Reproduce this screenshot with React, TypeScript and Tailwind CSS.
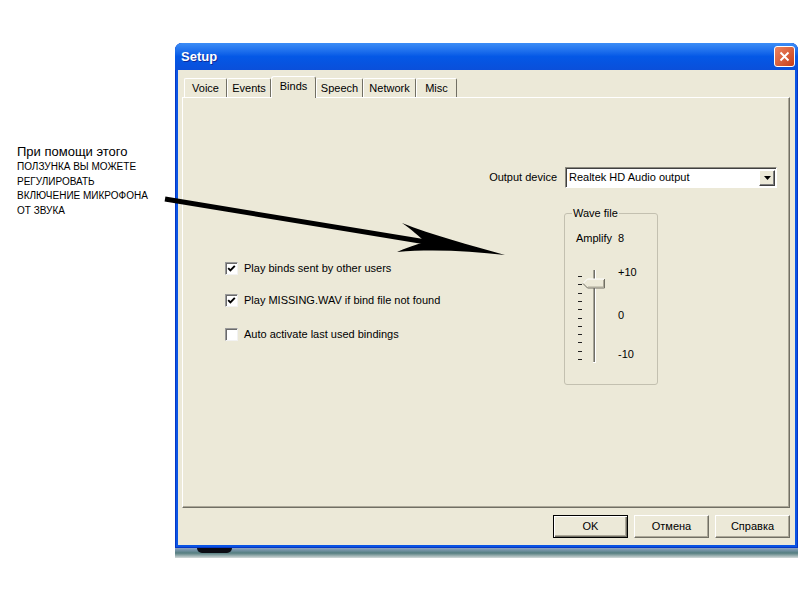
import React from "react";

const TICKS = [0, 1, 2, 3, 4, 5, 6, 7, 8, 9, 10];

function Tab({ label, w, selected }: { label: string; w: string; selected?: boolean }) {
  if (selected) {
    return (
      <div
        className={`${w} relative z-10 -mb-px h-[22px] flex justify-center pt-[3px] bg-[#ECE9D8] border-t border-l border-white border-r border-r-[#716F64] rounded-t-[3px]`}
      >
        <span className="leading-[13px]">{label}</span>
      </div>
    );
  }
  return (
    <div
      className={`${w} h-[19px] flex justify-center pt-[3px] bg-[#ECE9D8] border-t border-l border-white border-r border-r-[#716F64] rounded-t-[2px]`}
    >
      <span className="leading-[13px]">{label}</span>
    </div>
  );
}

function Check({ checked, label }: { checked?: boolean; label: string }) {
  return (
    <div className="flex items-center h-[13px]">
      <div className="w-[13px] h-[13px] shrink-0 bg-white border border-[#9a9a9a] border-r-[#f2f2f2] border-b-[#f2f2f2] shadow-[inset_1px_1px_0_#6a6a6a] flex items-center justify-center">
        {checked && (
          <svg width="9" height="9" viewBox="0 0 9 9">
            <path d="M1.2 4.2 L3.4 6.4 L7.8 1.8" stroke="#000" strokeWidth="1.9" fill="none" />
          </svg>
        )}
      </div>
      <span className="ml-[6px] leading-[13px] whitespace-nowrap">{label}</span>
    </div>
  );
}

function Btn({ label, w, def }: { label: string; w: string; def?: boolean }) {
  return def ? (
    <div
      className={`${w} h-[23px] flex items-center justify-center bg-[#ECE9D8] border border-black shadow-[inset_1px_1px_0_#ffffff,inset_-1px_-1px_0_#716F64,inset_-2px_-2px_0_#ACA899]`}
    >
      {label}
    </div>
  ) : (
    <div
      className={`${w} h-[23px] flex items-center justify-center bg-[#ECE9D8] border border-white border-r-[#716F64] border-b-[#716F64] shadow-[inset_-1px_-1px_0_#ACA899]`}
    >
      {label}
    </div>
  );
}

function Slider() {
  return (
    <svg width="36" height="100" viewBox="0 0 36 100">
      {TICKS.map((i) => {
        const y = Math.round(10 + i * 8.3) + 0.5;
        return <line key={i} x1="4" x2="8" y1={y} y2={y} stroke="#222" strokeWidth="1" />;
      })}
      <rect x="19" y="4" width="1" height="93" fill="#A7A496" />
      <rect x="20" y="4" width="1" height="93" fill="#6F6E68" />
      <rect x="21" y="4" width="1" height="93" fill="#FFFFFF" />
      <rect x="19" y="96" width="3" height="1" fill="#FFFFFF" />
      <polygon points="9,17.5 13.5,13 31,13 31,22 13.5,22" fill="#ECE9D8" />
      <polyline points="9,17.5 13.5,13 30.5,13" stroke="#FFFFFF" strokeWidth="1" fill="none" />
      <polyline points="30.5,13 30.5,22 13.5,22 9,17.5" stroke="#716F64" strokeWidth="1" fill="none" />
      <polyline points="29.5,14 29.5,21 14,21" stroke="#ACA899" strokeWidth="1" fill="none" />
    </svg>
  );
}

export default function App() {
  return (
    <div className="relative w-[800px] h-[600px] overflow-hidden bg-white text-black font-['Liberation_Sans',Arial,sans-serif] text-[11px]">
      <div className="pl-[175px] pt-[43px]">
        {/* Window */}
        <div className="w-[623px] rounded-t-[7px] bg-[#0A54E4] shadow-[inset_1px_0_0_#0637C4,inset_-1px_0_0_#0637C4,inset_0_-1px_0_#0637C4]">
          {/* Title bar */}
          <div className="h-[27px] rounded-t-[7px] bg-gradient-to-b from-[#3C8DF6] via-[#0458E6] to-[#0A4FDA] flex items-center justify-between pl-[6px] pr-[3px]">
            <span className="text-white font-bold text-[13px] [text-shadow:1px_1px_0_#0C2A9A]">Setup</span>
            <div className="w-[21px] h-[21px] rounded-[3px] border border-white bg-gradient-to-br from-[#EC8460] to-[#C73C12] flex items-center justify-center">
              <svg width="11" height="11" viewBox="0 0 11 11">
                <path d="M1.5 1.5 L9.5 9.5 M9.5 1.5 L1.5 9.5" stroke="#fff" strokeWidth="1.9" />
              </svg>
            </div>
          </div>
          {/* Client */}
          <div className="mx-[3px] h-[475px] bg-[#ECE9D8] flex flex-col">
            <div className="flex items-end pl-[6px] mt-[6px] h-[21px]">
              <Tab label="Voice" w="w-[43px]" />
              <Tab label="Events" w="w-[44px]" />
              <Tab label="Binds" w="w-[45px]" selected />
              <Tab label="Speech" w="w-[47px]" />
              <Tab label="Network" w="w-[53px]" />
              <Tab label="Misc" w="w-[41px]" />
            </div>
            {/* Tab panel */}
            <div className="ml-[4px] w-[608px] h-[411px] border border-white border-r-[#716F64] border-b-[#716F64] shadow-[inset_-1px_-1px_0_#ACA899] flex flex-col">
              <div className="mt-[69px] flex justify-end items-center pr-[12px]">
                <span className="mr-[8px]">Output device</span>
                <div className="w-[212px] h-[21px] bg-white border border-[#8d8b80] border-r-[#ffffff] border-b-[#ffffff] shadow-[inset_1px_1px_0_#404040] flex items-center pl-[3px] pr-[1px]">
                  <span className="flex-1">Realtek HD Audio output</span>
                  <div className="w-[16px] h-[16px] bg-[#ECE9D8] border border-white border-r-[#404040] border-b-[#404040] shadow-[inset_-1px_-1px_0_#808080] flex items-center justify-center">
                    <svg width="7" height="4" viewBox="0 0 7 4">
                      <path d="M0 0 H7 L3.5 4 Z" fill="#000" />
                    </svg>
                  </div>
                </div>
              </div>
              <div className="mt-[25px] flex">
                <div className="w-[381px] pl-[42px] pt-[49px] flex flex-col">
                  <Check checked label="Play binds sent by other users" />
                  <div className="mt-[19px]">
                    <Check checked label="Play MISSING.WAV if bind file not found" />
                  </div>
                  <div className="mt-[21px]">
                    <Check label="Auto activate last used bindings" />
                  </div>
                </div>
                {/* Group box */}
                <div className="relative w-[94px] h-[172px] border border-[#C3C0B0] rounded-[3px]">
                  <span className="absolute -top-[7px] left-[7px] px-[1px] bg-[#ECE9D8] leading-[13px]">Wave file</span>
                  <div className="pt-[18px] pl-[11px] flex leading-[13px]">
                    <span className="w-[42px]">Amplify</span>
                    <span>8</span>
                  </div>
                  <div className="mt-[21px] pl-[9px] flex">
                    <Slider />
                    <div className="ml-[8px] flex flex-col leading-[13px]">
                      <span>+10</span>
                      <span className="mt-[30px]">0</span>
                      <span className="mt-[26px]">-10</span>
                    </div>
                  </div>
                </div>
              </div>
            </div>
            {/* Buttons */}
            <div className="mt-[7px] flex justify-end pr-[5px] gap-[6px]">
              <Btn label="OK" w="w-[75px]" def />
              <Btn label="Отмена" w="w-[75px]" />
              <Btn label="Справка" w="w-[75px]" />
            </div>
          </div>
          <div className="h-[3px]" />
        </div>
        {/* strip below window */}
        <div className="relative w-[623px] h-[10px] bg-gradient-to-b from-[#8EA4C4] via-[#557E80] to-[#D4DADA]">
          <div className="absolute left-[22px] top-0 w-[35px] h-[5px] rounded-b-full bg-[#0c0c14]" />
        </div>
      </div>

      {/* Annotation */}
      <div className="absolute left-[17px] top-[144px] flex flex-col">
        <span className="text-[13px] leading-[16px]">При помощи этого</span>
        <span className="text-[10px] leading-[14.5px]">ПОЛЗУНКА ВЫ МОЖЕТЕ</span>
        <span className="text-[10px] leading-[14.5px]">РЕГУЛИРОВАТЬ</span>
        <span className="text-[10px] leading-[14.5px]">ВКЛЮЧЕНИЕ МИКРОФОНА</span>
        <span className="text-[10px] leading-[14.5px]">ОТ ЗВУКА</span>
      </div>

      {/* Arrow */}
      <svg className="absolute left-0 top-0 pointer-events-none" width="800" height="600" viewBox="0 0 800 600">
        <line x1="165" y1="199" x2="426" y2="242" stroke="#000" strokeWidth="5" />
        <path
          d="M505,255 C470,245 432,235 402,223 C412,230 419,236 425,242 C415,245 405,248 397,252 C432,249 470,251 505,255 Z"
          fill="#000"
        />
      </svg>
    </div>
  );
}
